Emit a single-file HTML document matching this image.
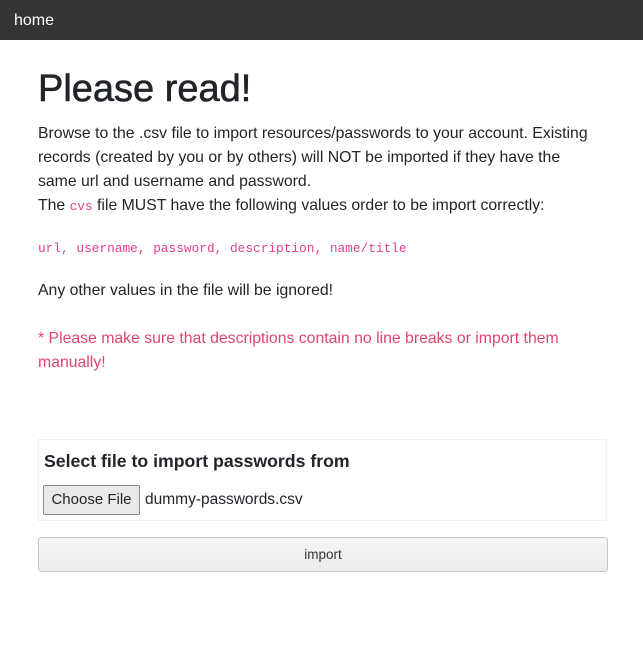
<!DOCTYPE html>
<html><head><style>
body{margin:0;width:643px;height:657px;background:#fff;font-family:"Liberation Sans",sans-serif;color:#212529;position:relative;overflow:hidden}
.nav{position:absolute;left:0;top:0;width:643px;height:40px;background:#343434;color:#fff;font-size:16px}
.a{position:absolute;white-space:nowrap}
.t{font-size:15.8px;line-height:24px}
.pink{color:#e83e8c;font-family:"Liberation Mono",monospace}
.red{color:#e0456a}
</style></head><body>
<div class="nav"><span class="a" style="left:14px;top:12px">home</span></div>
<div class="a" style="left:38px;top:68px;font-size:38px;-webkit-text-stroke:0.6px #212529">Please read!</div>
<div class="a t" style="left:38px;top:122px">Browse to the .csv file to import resources/passwords to your account. Existing</div>
<div class="a t" style="left:38px;top:146px">records (created by you or by others) will NOT be imported if they have the</div>
<div class="a t" style="left:38px;top:170px">same url and username and password.</div>
<div class="a t" style="left:38px;top:194px">The <span class="pink" style="font-size:12.8px">cvs</span> file MUST have the following values order to be import correctly:</div>
<div class="a pink" style="left:38px;top:241px;font-size:12.8px">url, username, password, description, name/title</div>
<div class="a t" style="left:38px;top:279px">Any other values in the file will be ignored!</div>
<div class="a t red" style="left:38px;top:327px">* Please make sure that descriptions contain no line breaks or import them</div>
<div class="a t red" style="left:38px;top:351px">manually!</div>
<div class="a" style="left:38px;top:439px;width:567px;height:80px;border:1px solid #e8f1fa"></div>
<div class="a" style="left:44px;top:451px;font-size:17.7px;font-weight:bold">Select file to import passwords from</div>
<div class="a" style="left:43px;top:485px;width:95px;height:28px;border:1px solid #8a8a8a;background:#e9e9e9;border-radius:2px;font-size:15px;line-height:28px;text-align:center">Choose File</div>
<div class="a" style="left:145px;top:491px;font-size:15.5px">dummy-passwords.csv</div>
<div class="a" style="left:38px;top:537px;width:568px;height:33px;border:1px solid #c8c8c8;border-radius:3px;background:linear-gradient(#f5f5f5,#ececec);font-size:13.5px;line-height:33px;text-align:center;color:#333">import</div>
</body></html>
